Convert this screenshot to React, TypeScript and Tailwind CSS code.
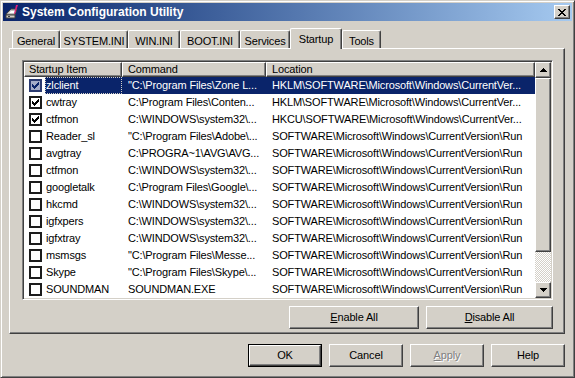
import React from "react";

const raised =
  "border border-t-white border-l-white border-r-[#404040] border-b-[#404040] shadow-[inset_-1px_-1px_#808080]";

type Row = { name: string; cmd: string; loc: string; on: boolean };

const rows: Row[] = [
  { name: "zlclient", cmd: '"C:\\Program Files\\Zone L...', loc: "HKLM\\SOFTWARE\\Microsoft\\Windows\\CurrentVer...", on: true },
  { name: "cwtray", cmd: "C:\\Program Files\\Conten...", loc: "HKLM\\SOFTWARE\\Microsoft\\Windows\\CurrentVer...", on: true },
  { name: "ctfmon", cmd: "C:\\WINDOWS\\system32\\...", loc: "HKCU\\SOFTWARE\\Microsoft\\Windows\\CurrentVer...", on: true },
  { name: "Reader_sl", cmd: '"C:\\Program Files\\Adobe\\...', loc: "SOFTWARE\\Microsoft\\Windows\\CurrentVersion\\Run", on: false },
  { name: "avgtray", cmd: "C:\\PROGRA~1\\AVG\\AVG...", loc: "SOFTWARE\\Microsoft\\Windows\\CurrentVersion\\Run", on: false },
  { name: "ctfmon", cmd: "C:\\WINDOWS\\system32\\...", loc: "SOFTWARE\\Microsoft\\Windows\\CurrentVersion\\Run", on: false },
  { name: "googletalk", cmd: "C:\\Program Files\\Google\\...", loc: "SOFTWARE\\Microsoft\\Windows\\CurrentVersion\\Run", on: false },
  { name: "hkcmd", cmd: "C:\\WINDOWS\\system32\\...", loc: "SOFTWARE\\Microsoft\\Windows\\CurrentVersion\\Run", on: false },
  { name: "igfxpers", cmd: "C:\\WINDOWS\\system32\\...", loc: "SOFTWARE\\Microsoft\\Windows\\CurrentVersion\\Run", on: false },
  { name: "igfxtray", cmd: "C:\\WINDOWS\\system32\\...", loc: "SOFTWARE\\Microsoft\\Windows\\CurrentVersion\\Run", on: false },
  { name: "msmsgs", cmd: '"C:\\Program Files\\Messe...', loc: "SOFTWARE\\Microsoft\\Windows\\CurrentVersion\\Run", on: false },
  { name: "Skype", cmd: '"C:\\Program Files\\Skype\\...', loc: "SOFTWARE\\Microsoft\\Windows\\CurrentVersion\\Run", on: false },
  { name: "SOUNDMAN", cmd: "SOUNDMAN.EXE", loc: "SOFTWARE\\Microsoft\\Windows\\CurrentVersion\\Run", on: false },
];

const tabs = [
  { label: "General", w: "w-[48px]" },
  { label: "SYSTEM.INI", w: "w-[68px]" },
  { label: "WIN.INI", w: "w-[52px]" },
  { label: "BOOT.INI", w: "w-[60px]" },
  { label: "Services", w: "w-[50px]" },
  { label: "Startup", w: "w-[52px]", active: true },
  { label: "Tools", w: "w-[39px]" },
];

const Check = ({ on, sel }: { on: boolean; sel?: boolean }) => (
  <span
    className={`flex h-[13px] w-[13px] shrink-0 items-center justify-center border-2 ${
      sel ? "border-[#2a3a70] bg-[#a4acc8]" : "border-[#1c1c1c] bg-white"
    }`}
  >
    {on && (
      <svg width="7" height="7" viewBox="0 0 7 7">
        <path d="M0 2h1v1h1v1h1V3h1V2h1V1h1V0h1v3H6v1H5v1H4v1H3v1H2V6H1V5H0z" fill={sel ? "#0a246a" : "#000"} />
      </svg>
    )}
  </span>
);

const Arrow = ({ up }: { up?: boolean }) => (
  <div className={`flex h-[16px] w-[16px] items-center justify-center bg-[#d4d0c8] ${raised}`}>
    <svg width="7" height="4" viewBox="0 0 7 4">
      <path d={up ? "M3 0h1v1h1v1h1v1h1v1H0V3h1V2h1V1h1z" : "M0 0h7v1H6v1H5v1H4v1H3V3H2V2H1V1H0z"} fill="#000" />
    </svg>
  </div>
);

const Btn = ({
  children,
  w,
  def,
  disabled,
}: {
  children: React.ReactNode;
  w: string;
  def?: boolean;
  disabled?: boolean;
}) => (
  <div className={`${w} h-[23px] ${def ? "border border-black" : ""}`}>
    <div
      className={`flex h-full w-full items-center justify-center bg-[#d4d0c8] text-[11px] ${raised} ${
        disabled ? "text-[#808080] [text-shadow:1px_1px_#fff]" : "text-black"
      }`}
    >
      {children}
    </div>
  </div>
);

const App: React.FC = () => (
  <div className="flex h-[378px] w-[575px] flex-col border border-t-[#d4d0c8] border-l-[#d4d0c8] border-r-[#404040] border-b-[#404040] bg-[#d4d0c8] p-[2px] font-['Liberation_Sans',Arial,sans-serif] tracking-[-0.15px] shadow-[inset_1px_1px_#fff,inset_-1px_-1px_#808080] antialiased">
    {/* title bar */}
    <div className="flex h-[18px] shrink-0 items-center bg-gradient-to-r from-[#0a246a] to-[#a6caf0] pl-[2px] pr-[2px]">
      <svg width="16" height="16" viewBox="0 0 16 16" className="shrink-0">
        <path d="M2 9l4-4h6l-2 6H1z" fill="#c0c0c0" stroke="#404040" strokeWidth="1" />
        <path d="M4 9l2-2h4l-1 2z" fill="#ffffff" />
        <path d="M1 11h9v3H1z" fill="#d4d0c8" stroke="#404040" strokeWidth="1" />
        <path d="M11 1l2 0l-3 9l-1 0z" fill="#e0207a" />
        <path d="M3 12h2v1H3z" fill="#404040" />
      </svg>
      <span className="ml-[1px] text-[12px] font-bold tracking-normal text-white">System Configuration Utility</span>
      <div className="ml-auto flex h-[14px] w-[16px] items-center justify-center bg-[#d4d0c8] border border-t-white border-l-white border-r-[#404040] border-b-[#404040] shadow-[inset_-1px_-1px_#808080]">
        <svg width="8" height="7" viewBox="0 0 8 7">
          <path d="M0 0h2v1h1v1h2V1h1V0h2v1H7v1H6v1H5v1h1v1h1v1h1v1H6V6H5V5H3v1H2v1H0V6h1V5h1V4h1V3H2V2H1V1H0z" fill="#000" />
        </svg>
      </div>
    </div>

    {/* body */}
    <div className="flex flex-1 flex-col pl-[6px] pr-[7px] pt-[7px]">
      <div className="relative z-10 flex h-[20px] items-end pl-[3px]">
        {tabs.map((t) =>
          t.active ? (
            <div
              key={t.label}
              className={`${t.w} -mb-px flex h-[21px] items-start justify-center rounded-t-[2px] border-l border-t border-r border-l-white border-t-white border-r-[#404040] bg-[#d4d0c8] pt-[2px] text-[11px] text-black shadow-[inset_-1px_0_#808080]`}
            >
              {t.label}
            </div>
          ) : (
            <div
              key={t.label}
              className={`${t.w} flex h-[18px] items-start justify-center rounded-t-[2px] border-l border-t border-r border-l-white border-t-white border-r-[#404040] bg-[#d4d0c8] pt-[2px] text-[11px] text-black shadow-[inset_-1px_0_#808080]`}
            >
              {t.label}
            </div>
          )
        )}
      </div>

      {/* tab panel */}
      <div className={`flex h-[286px] flex-col bg-[#d4d0c8] pl-[12px] pr-[11px] pt-[11px] ${raised}`}>
        <div className="flex h-[240px] w-[531px] border border-t-[#808080] border-l-[#808080] border-r-white border-b-white bg-white p-px shadow-[inset_1px_1px_#404040,inset_-1px_-1px_#d4d0c8]">
          <div className="flex min-w-0 flex-1 flex-col overflow-hidden text-[11px] text-black">
            <div className="flex h-[15px] shrink-0">
              <div className={`flex w-[98px] items-center bg-[#d4d0c8] pl-[4px] ${raised}`}>Startup Item</div>
              <div className={`flex w-[144px] items-center bg-[#d4d0c8] pl-[5px] ${raised}`}>Command</div>
              <div className={`flex flex-1 items-center bg-[#d4d0c8] pl-[5px] ${raised}`}>Location</div>
            </div>
            {rows.map((r, i) => {
              const sel = i === 0;
              return (
                <div key={i} className="flex h-[17px] shrink-0 items-center whitespace-nowrap leading-[17px]">
                  <div className="flex w-[98px] shrink-0 items-center pl-[5px]">
                    <Check on={r.on} sel={sel} />
                    <span
                      className={`ml-[3px] flex-1 pl-[1px] ${
                        sel ? "bg-[#0a246a] text-white outline-1 outline-dotted outline-offset-[-1px] outline-[#d4d0c8]" : ""
                      }`}
                    >
                      {r.name}
                    </span>
                  </div>
                  <div className={`flex h-full flex-1 items-center ${sel ? "bg-[#0a246a] text-white" : ""}`}>
                    <span className="w-[144px] shrink-0 overflow-hidden pl-[6px]">{r.cmd}</span>
                    <span className="min-w-0 flex-1 overflow-hidden pl-[6px]">{r.loc}</span>
                  </div>
                </div>
              );
            })}
          </div>
          {/* scrollbar */}
          <div className="flex w-[16px] shrink-0 flex-col">
            <Arrow up />
            <div className={`h-[174px] shrink-0 bg-[#d4d0c8] ${raised}`} />
            <div className="flex-1 bg-[repeating-conic-gradient(#ffffff_0_25%,#d4d0c8_0_50%)] bg-[length:2px_2px]" />
            <Arrow />
          </div>
        </div>

        <div className="mt-[6px] flex justify-end gap-[7px]">
          <Btn w="w-[130px]">
            <span>
              <span className="underline underline-offset-1">E</span>nable All
            </span>
          </Btn>
          <Btn w="w-[127px]">
            <span>
              <span className="underline underline-offset-1">D</span>isable All
            </span>
          </Btn>
        </div>
      </div>

      {/* dialog buttons */}
      <div className="mt-[10px] flex justify-end gap-[7px]">
        <Btn w="w-[74px]" def>
          OK
        </Btn>
        <Btn w="w-[74px]">Cancel</Btn>
        <Btn w="w-[74px]" disabled>
          <span>
            <span className="underline underline-offset-1">A</span>pply
          </span>
        </Btn>
        <Btn w="w-[74px]">Help</Btn>
      </div>
    </div>
  </div>
);

export default App;
